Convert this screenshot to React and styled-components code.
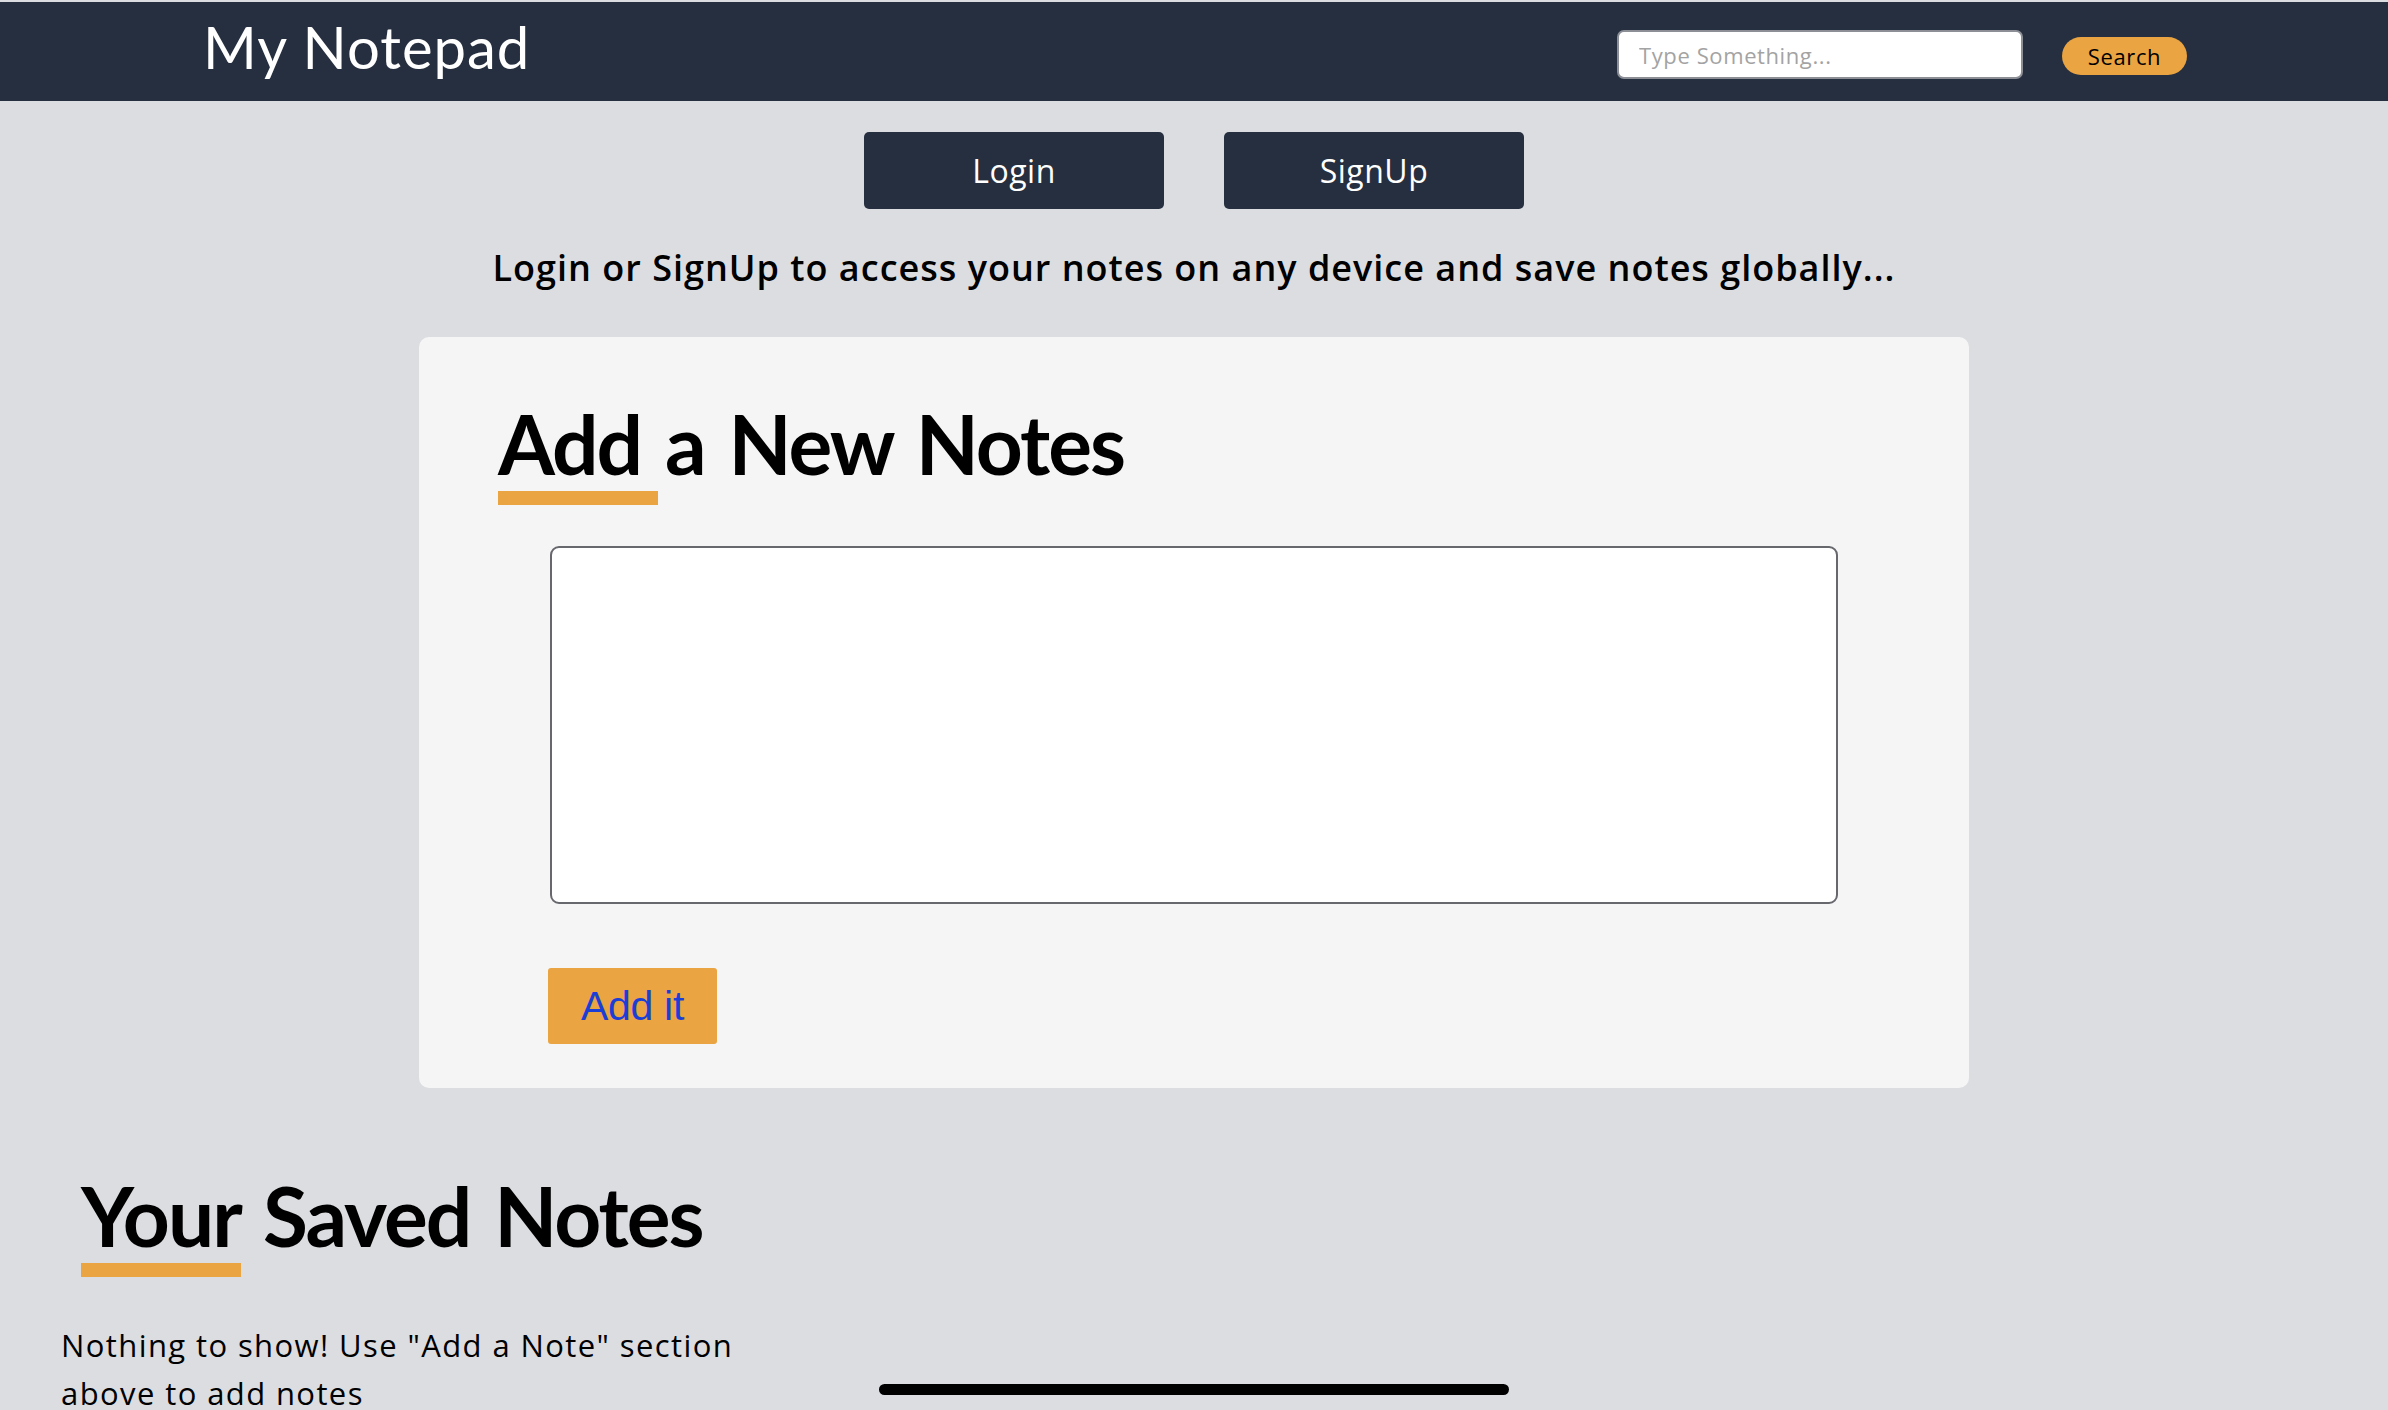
import styled, { createGlobalStyle } from "styled-components";

const GlobalStyle = createGlobalStyle`
  html, body {
    margin: 0;
    padding: 0;
  }
  body {
    background: #dcdde1;
    font-family: "Open Sans", sans-serif;
    height: 100vh;
    overflow: hidden;
  }
  * { box-sizing: border-box; }
`;

const Nav = styled.nav`
  margin-top: 2px;
  height: 99px;
  background: #262f3f;
  display: flex;
  align-items: center;
  padding: 0 201px 0 203px;
`;

const Brand = styled.a`
  align-self: flex-start;
  margin-top: 16px;
  font-family: "Lato", sans-serif;
  font-size: 58px;
  font-weight: 400;
  line-height: 1;
  letter-spacing: 1px;
  color: #fff;
  text-decoration: none;
`;

const SearchForm = styled.form`
  margin-left: auto;
  display: flex;
  align-items: center;
  gap: 39px;
  margin-top: 6px;
`;

const SearchInput = styled.input`
  width: 406px;
  height: 49px;
  border: 2px solid #8d8f96;
  border-radius: 7px;
  padding: 0 20px;
  font-family: "Open Sans", sans-serif;
  font-size: 22px;
  letter-spacing: 0.6px;
  color: #222;
  outline: none;

  &::placeholder {
    color: #a3a3a3;
  }
`;

const SearchBtn = styled.button`
  width: 125px;
  height: 38px;
  border: none;
  border-radius: 19px;
  background: #eaa441;
  color: #000;
  font-family: "Open Sans", sans-serif;
  font-size: 22px;
  font-weight: 500;
  letter-spacing: 0.6px;
  margin-top: 3px;
`;

const AuthRow = styled.div`
  display: flex;
  justify-content: center;
  gap: 60px;
  margin-top: 31px;
`;

const AuthBtn = styled.button`
  width: 300px;
  height: 77px;
  border: none;
  border-radius: 5px;
  background: #262f3f;
  color: #fff;
  font-family: "Open Sans", sans-serif;
  font-size: 32px;
  letter-spacing: 0.5px;
`;

const Tagline = styled.p`
  margin: 39px 0 0;
  text-align: center;
  font-family: "Open Sans", sans-serif;
  font-size: 36px;
  font-weight: 600;
  line-height: 40px;
  letter-spacing: 1px;
  color: #000;
`;

const Card = styled.section`
  width: 1550px;
  margin: 49px auto 0;
  background: #f5f5f5;
  border-radius: 10px;
  padding: 65px 0 44px;
`;

const Heading = styled.h2`
  margin: 0 0 0 ${(p) => p.$indent}px;
  font-family: "Lato", sans-serif;
  font-size: 82px;
  font-weight: 700;
  line-height: 1;
  letter-spacing: -2px;
  word-spacing: 6px;
  color: #000;

  &::after {
    content: "";
    display: block;
    width: 160px;
    height: 14px;
    margin-top: 7px;
    background: #eaa441;
  }
`;

const NoteForm = styled.form`
  padding: 0 131px;
  margin-top: 41px;
  display: flex;
  flex-direction: column;
  align-items: flex-start;
`;

const NoteInput = styled.textarea`
  width: 100%;
  height: 358px;
  border: 2px solid #67686e;
  border-radius: 9px;
  background: #fff;
  resize: none;
  outline: none;
  font-family: "Open Sans", sans-serif;
  font-size: 22px;
`;

const AddBtn = styled.button`
  margin: 64px 0 0 -2px;
  width: 169px;
  height: 76px;
  border: none;
  border-radius: 3px;
  background: #eaa441;
  color: #1b3fd6;
  font-family: "Liberation Sans", Arial, sans-serif;
  font-size: 41px;
  letter-spacing: -0.3px;
`;

const Saved = styled.section`
  margin-top: 86px;
`;

const Empty = styled.p`
  margin: 44px 0 0 61px;
  max-width: 720px;
  font-family: "Open Sans", sans-serif;
  font-size: 31px;
  line-height: 48px;
  letter-spacing: 1.4px;
  color: #000;
`;

const HomeBar = styled.div`
  position: fixed;
  left: 50%;
  bottom: 15px;
  transform: translateX(-50%);
  width: 630px;
  height: 11px;
  border-radius: 6px;
  background: #000;
`;

export default function App() {
  return (
    <>
      <GlobalStyle />
      <Nav>
        <Brand href="#">My Notepad</Brand>
        <SearchForm onSubmit={(e) => e.preventDefault()}>
          <SearchInput type="text" placeholder="Type Something..." />
          <SearchBtn type="submit">Search</SearchBtn>
        </SearchForm>
      </Nav>

      <AuthRow>
        <AuthBtn>Login</AuthBtn>
        <AuthBtn>SignUp</AuthBtn>
      </AuthRow>
      <Tagline>
        Login or SignUp to access your notes on any device and save notes
        globally...
      </Tagline>

      <Card>
        <Heading $indent={79}>Add a New Notes</Heading>
        <NoteForm onSubmit={(e) => e.preventDefault()}>
          <NoteInput />
          <AddBtn type="submit">Add it</AddBtn>
        </NoteForm>
      </Card>

      <Saved>
        <Heading $indent={81}>Your Saved Notes</Heading>
        <Empty>Nothing to show! Use "Add a Note" section above to add notes</Empty>
      </Saved>

      <HomeBar />
    </>
  );
}
